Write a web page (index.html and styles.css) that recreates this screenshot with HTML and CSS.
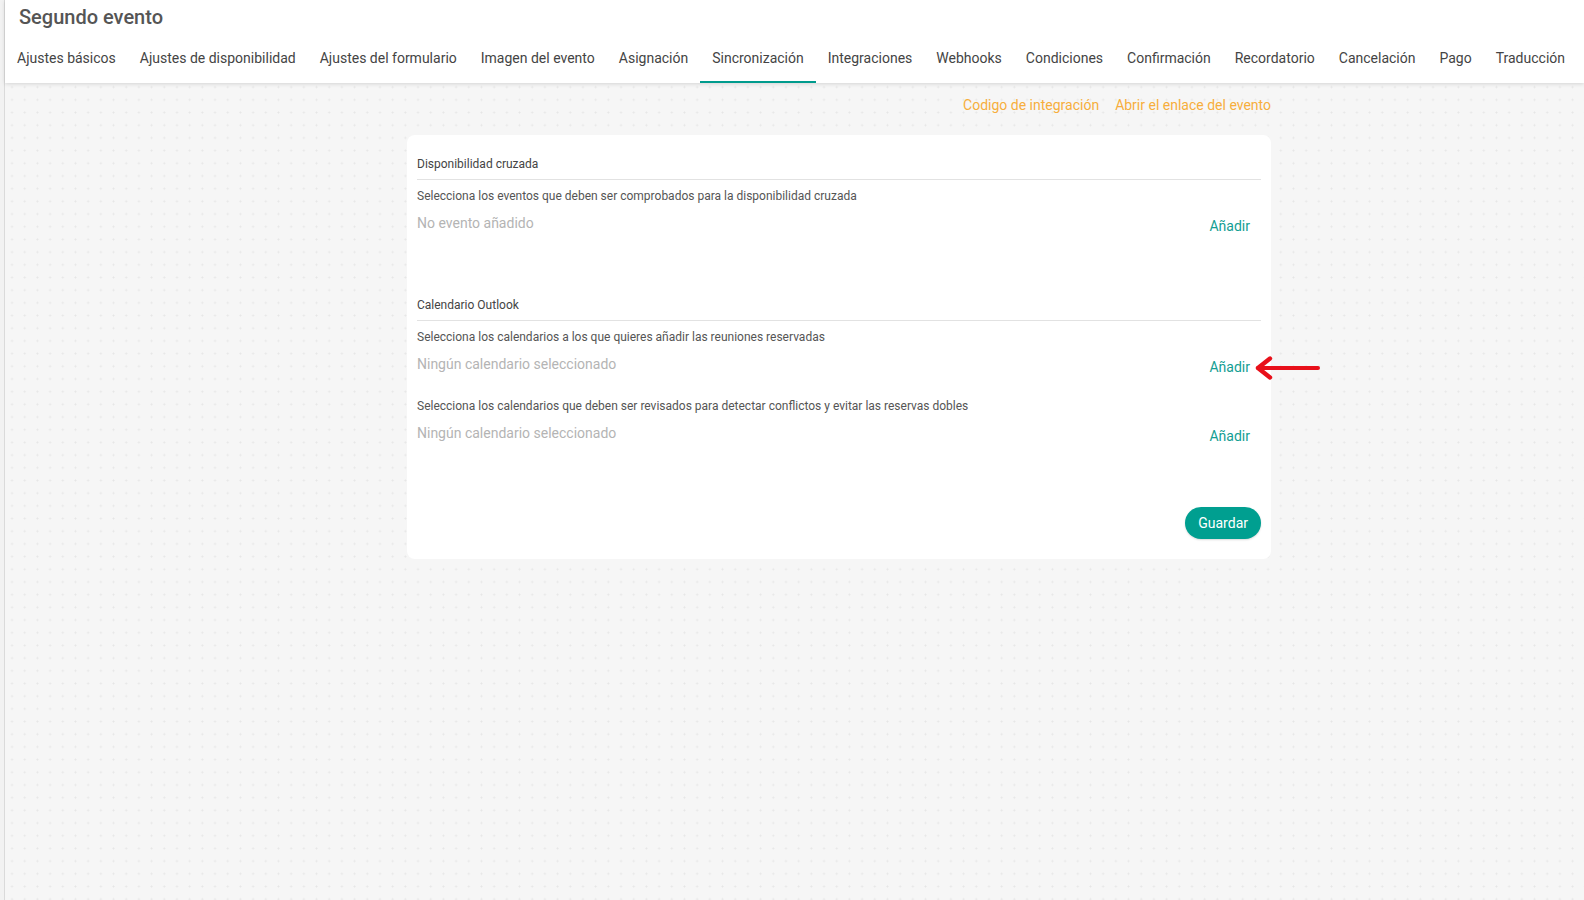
FILE: index.html
```html
<!DOCTYPE html>
<html lang="es">
<head>
<meta charset="utf-8">
<title>Segundo evento</title>
<link rel="stylesheet" href="styles.css">
</head>
<body>
<div class="rail"></div>
<div class="main">
  <header class="header">
    <h1 class="title">Segundo evento</h1>
    <nav class="tabs">
      <a class="tab">Ajustes básicos</a>
      <a class="tab">Ajustes de disponibilidad</a>
      <a class="tab">Ajustes del formulario</a>
      <a class="tab">Imagen del evento</a>
      <a class="tab">Asignación</a>
      <a class="tab active">Sincronización</a>
      <a class="tab">Integraciones</a>
      <a class="tab">Webhooks</a>
      <a class="tab">Condiciones</a>
      <a class="tab">Confirmación</a>
      <a class="tab">Recordatorio</a>
      <a class="tab">Cancelación</a>
      <a class="tab">Pago</a>
      <a class="tab">Traducción</a>
    </nav>
  </header>
  <div class="content">
    <div class="links">
      <a class="link">Codigo de integración</a>
      <a class="link">Abrir el enlace del evento</a>
    </div>
    <div class="card">
      <section class="section">
        <div class="section-title">Disponibilidad cruzada</div>
        <div class="desc">Selecciona los eventos que deben ser comprobados para la disponibilidad cruzada</div>
        <div class="row">
          <span class="placeholder">No evento añadido</span>
          <a class="add">Añadir</a>
        </div>
      </section>
      <section class="section second">
        <div class="section-title">Calendario Outlook</div>
        <div class="desc">Selecciona los calendarios a los que quieres añadir las reuniones reservadas</div>
        <div class="row">
          <span class="placeholder">Ningún calendario seleccionado</span>
          <a class="add">Añadir</a>
          <svg class="arrow" width="70" height="26" viewBox="0 0 70 26" aria-hidden="true">
            <path d="M5 13 H65" stroke="#e8101a" stroke-width="4" stroke-linecap="round" fill="none"/>
            <path d="M17 3.5 L5 13 L17 22.5" stroke="#e8101a" stroke-width="4.4" stroke-linecap="round" stroke-linejoin="round" fill="none"/>
          </svg>
        </div>
        <div class="desc desc-gap">Selecciona los calendarios que deben ser revisados para detectar conflictos y evitar las reservas dobles</div>
        <div class="row">
          <span class="placeholder">Ningún calendario seleccionado</span>
          <a class="add">Añadir</a>
        </div>
      </section>
      <div class="footer">
        <button class="save" type="button">Guardar</button>
      </div>
    </div>
  </div>
</div>
</body>
</html>
```
FILE: styles.css
```css
* { box-sizing: border-box; }

html, body {
  margin: 0;
  padding: 0;
  height: 100%;
}

body {
  display: flex;
  font-family: Roboto, "Liberation Sans", Arial, sans-serif;
  color: #444;
  background-color: #f6f6f6;
  background-image: radial-gradient(circle at center, #e6e6e6 0.8px, transparent 1.2px);
  background-size: 12.7px 12.7px;
  background-position: 5.7px 4.7px;
  min-height: 100vh;
}

.rail {
  width: 5px;
  flex: 0 0 5px;
  background: #f2f2f2;
  border-right: 1px solid #dadada;
}

.main {
  flex: 1;
  min-width: 0;
}

.header {
  background: #fff;
  box-shadow: 0 1px 4px rgba(0, 0, 0, 0.14);
  position: relative;
}

.title {
  margin: 0;
  height: 35px;
  line-height: 35px;
  padding-left: 14px;
  font-size: 20px;
  font-weight: 500;
  color: #555;
}

.tabs {
  display: flex;
  height: 48px;
  white-space: nowrap;
}

.tab {
  display: block;
  padding: 0 12px;
  height: 48px;
  line-height: 46px;
  font-size: 14px;
  color: #444;
  border-bottom: 2px solid transparent;
  cursor: pointer;
}

.tab.active {
  border-bottom-color: #009b8d;
}

.content {
  width: 864px;
  margin-left: 402px;
  padding-top: 12px;
}

.links {
  display: flex;
  justify-content: flex-end;
  gap: 16px;
  font-size: 14px;
  line-height: 20px;
}

.link {
  color: #f6ae3c;
  cursor: pointer;
}

.card {
  margin-top: 20px;
  background: #fff;
  border-radius: 8px;
  padding: 21px 10px 20px 10px;
}

.section.second {
  margin-top: 61px;
}

.section-title {
  font-size: 12px;
  line-height: 16px;
  padding-bottom: 7px;
  border-bottom: 1px solid #e2e2e2;
  color: #444;
}

.desc {
  margin-top: 8px;
  font-size: 12px;
  line-height: 16px;
  color: #555;
}

.desc.desc-gap {
  margin-top: 21px;
}

.row {
  position: relative;
  display: flex;
  justify-content: space-between;
  align-items: flex-start;
  margin-top: 9px;
}

.placeholder {
  font-size: 14px;
  line-height: 20px;
  color: #b4b4b4;
}

.add {
  margin-top: 3px;
  margin-right: 11px;
  font-size: 14px;
  line-height: 20px;
  color: #139e93;
  cursor: pointer;
}

.arrow {
  position: absolute;
  left: calc(100% - 8px);
  top: 1px;
}

.footer {
  margin-top: 61px;
  display: flex;
  justify-content: flex-end;
}

.save {
  height: 32px;
  padding: 0 13px;
  border: none;
  border-radius: 16px;
  background: #009f90;
  color: #fff;
  font-family: Roboto, "Liberation Sans", Arial, sans-serif;
  font-size: 14px;
  font-weight: 400;
  box-shadow: 0 1px 2px rgba(0, 0, 0, 0.15);
  cursor: pointer;
}
```
